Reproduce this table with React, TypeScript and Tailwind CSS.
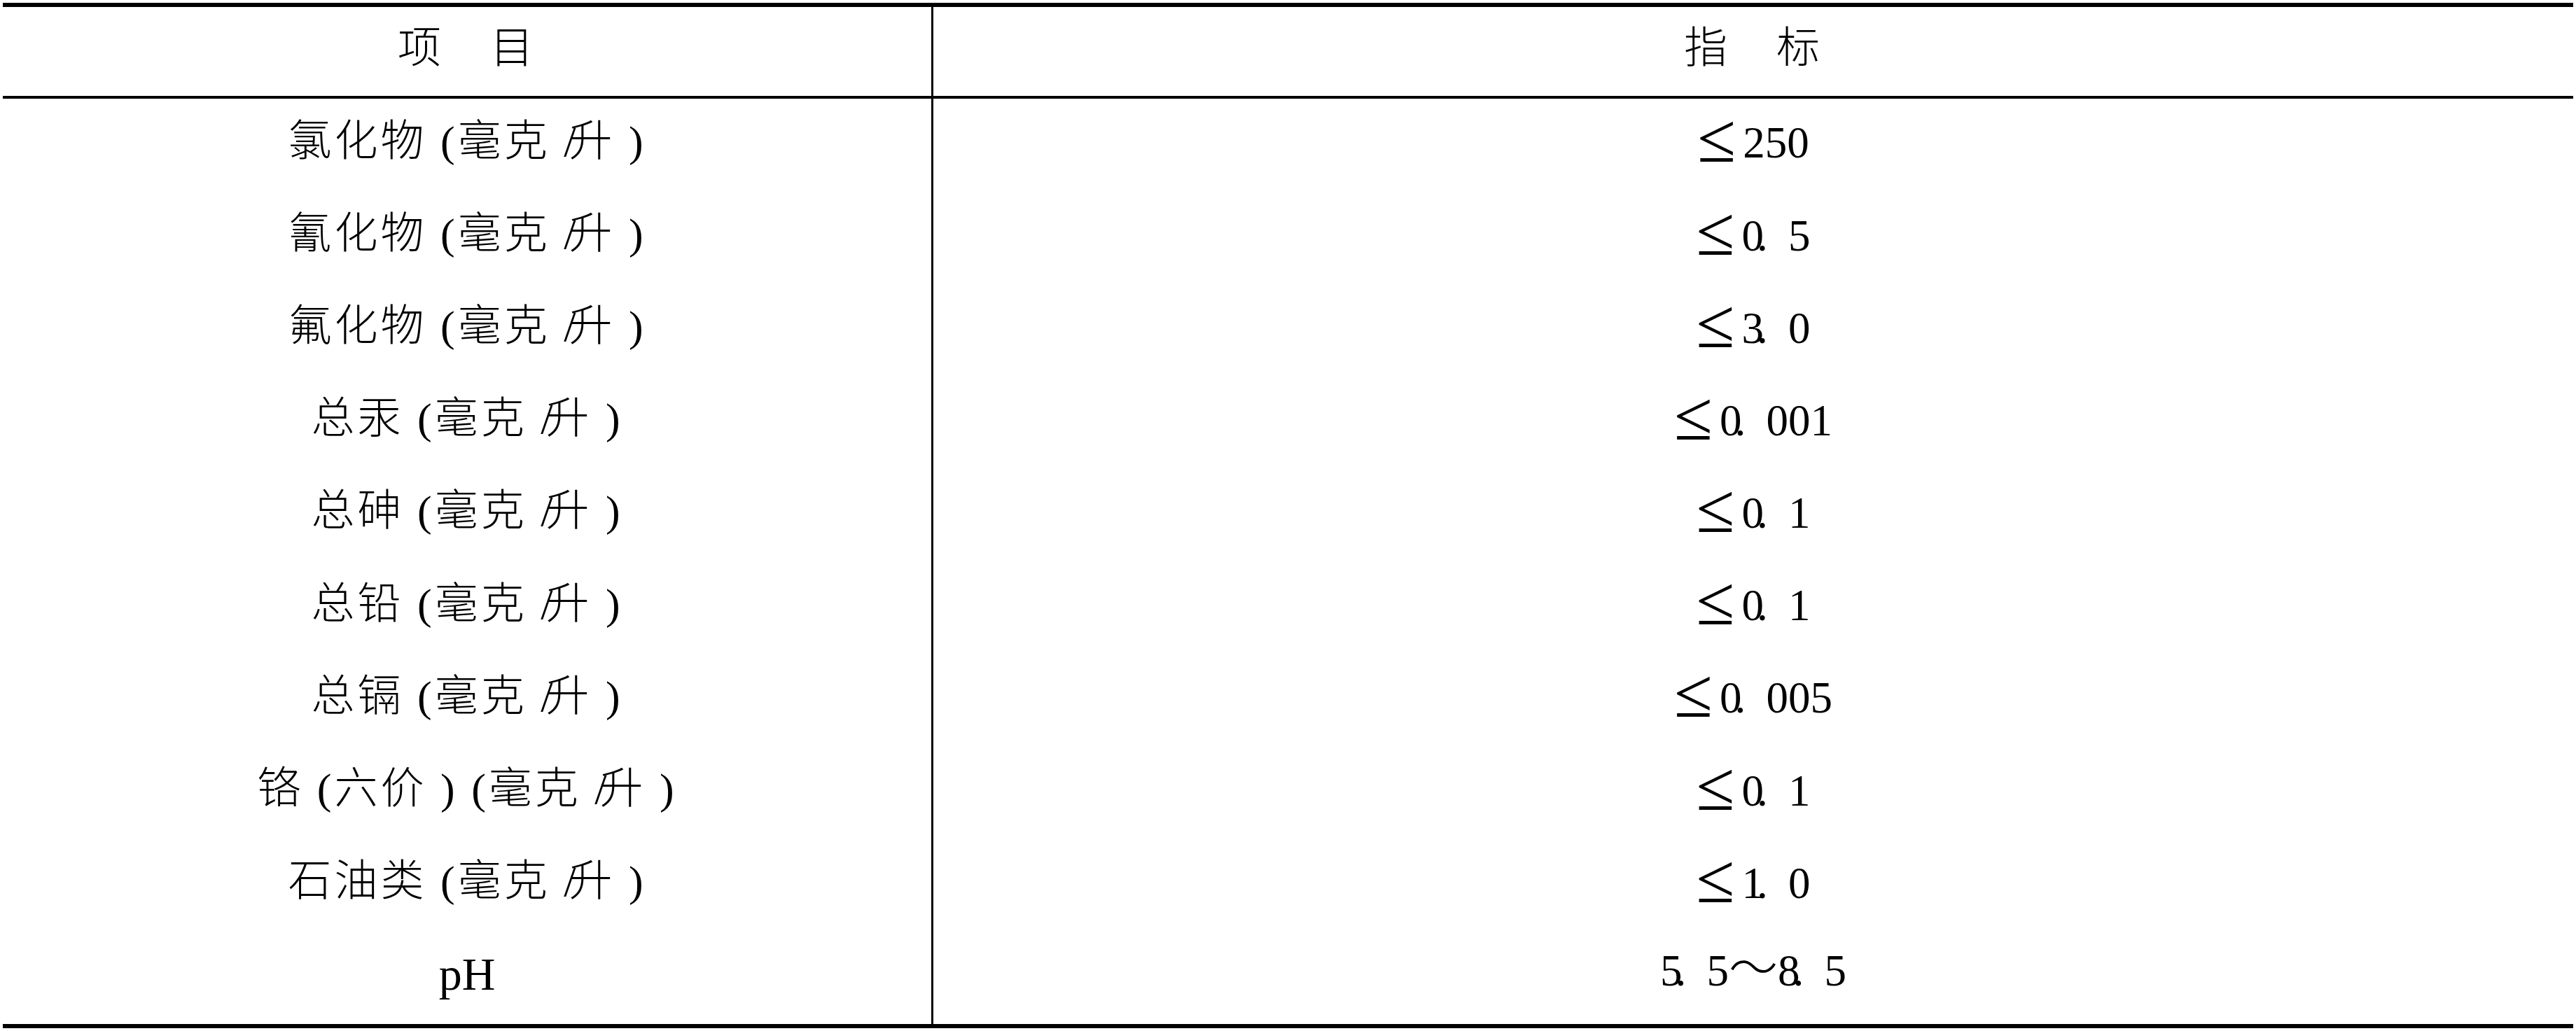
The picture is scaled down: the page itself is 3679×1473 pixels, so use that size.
import React from "react";

const rows: [string, string][] = [
  ["氯化物", "⩽250"],
  ["氰化物", "⩽0.5"],
  ["氟化物", "⩽3.0"],
  ["总汞", "⩽0.001"],
  ["总砷", "⩽0.1"],
  ["总铅", "⩽0.1"],
  ["总镉", "⩽0.005"],
  ["铬 (六价 )", "⩽0.1"],
  ["石油类", "⩽1.0"],
  ["pH", "5.5～8.5"],
];

function Label({ name }: { name: string }) {
  if (name === "pH") {
    return <span className="text-[66px] tracking-normal">pH</span>;
  }
  return (
    <span className="whitespace-pre">
      {name}
      {" (毫克 "}
      <span className="inline-block -mr-[14px]">/</span>
      {"升 )"}
    </span>
  );
}

function Value({ v }: { v: string }) {
  const parts = Array.from(v);
  return (
    <span className="whitespace-pre text-[63px] tracking-normal">
      {parts.map((c, i) => {
        if (c === "⩽")
          return (
            <span
              key={i}
              className="inline-block mr-[10px] text-[100px] leading-none translate-y-[6px]"
              style={{ fontFamily: '"Liberation Serif", serif' }}
            >
              ≤
            </span>
          );
        if (c === ".")
          return (
            <span key={i} className="inline-block w-[45px] -ml-[10px]">
              .
            </span>
          );
        if (c === "～")
          return (
            <span
              key={i}
              className="inline-block font-light text-[70px] leading-none"
              style={{ fontFamily: '"Noto Sans CJK SC", sans-serif' }}
            >
              ～
            </span>
          );
        return <span key={i}>{c}</span>;
      })}
    </span>
  );
}

export default function App() {
  return (
    <div
      className="w-[3679px] h-[1473px] bg-white text-black pt-[4px] px-[4px]"
      style={{ fontFamily: '"Liberation Serif", "Noto Sans CJK SC", serif' }}
    >
      <div className="border-t-[6px] border-b-[6px] border-black">
        <div className="flex h-[127px] border-b-[4px] border-black box-content">
          <div className="w-[1329px] border-r-[3px] border-black flex items-center justify-center pb-[8px] text-[62px] tracking-[4px] font-light">
            项　目
          </div>
          <div className="flex-1 flex items-center justify-center pb-[8px] text-[62px] tracking-[4px] font-light">
            指　标
          </div>
        </div>
        {rows.map(([name, v], i) => (
          <div key={i} className="flex h-[132.2px]">
            <div className="w-[1329px] border-r-[3px] border-black flex items-center justify-center pb-[10px] text-[62px] tracking-[4px] font-light">
              <Label name={name} />
            </div>
            <div className="flex-1 flex items-center justify-center pb-[20px]">
              <Value v={v} />
            </div>
          </div>
        ))}
      </div>
    </div>
  );
}
